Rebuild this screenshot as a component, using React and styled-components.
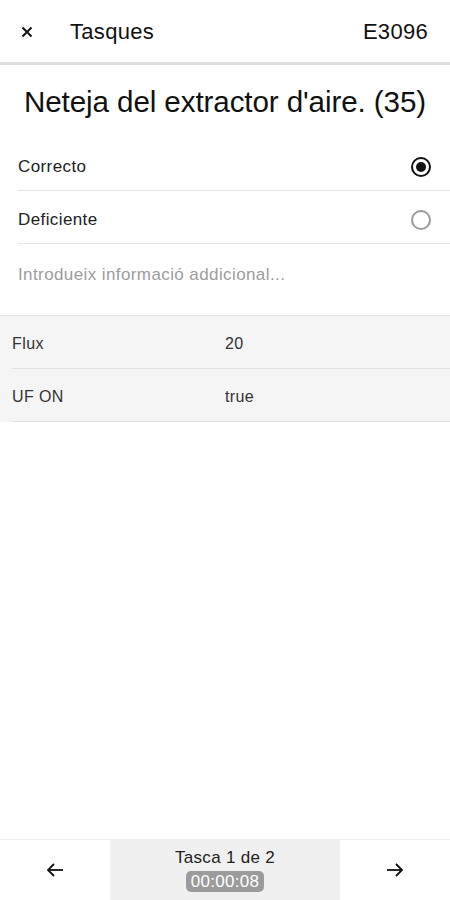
import React from "react";
import styled, { createGlobalStyle } from "styled-components";

const Global = createGlobalStyle`
  html, body {
    margin: 0;
    padding: 0;
    background: #fff;
    font-family: "Liberation Sans", Arial, sans-serif;
  }
  #root {
    height: 900px;
  }
`;

const Page = styled.div`
  height: 900px;
  display: flex;
  flex-direction: column;
  color: #111;
`;

const Header = styled.header`
  height: 65px;
  display: flex;
  align-items: center;
  padding: 2px 22px 0 18px;
  box-sizing: border-box;
  border-bottom: 3px solid #e0e0e0;
  flex-shrink: 0;
  font-size: 22px;
  letter-spacing: 0.3px;
`;

const CloseBtn = styled.span`
  width: 18px;
  display: flex;
  justify-content: center;
`;

const HeaderTitle = styled.span`
  margin-left: 34px;
  flex: 1;
`;

const Title = styled.h1`
  margin: 0;
  padding-top: 20px;
  height: 73px;
  box-sizing: border-box;
  font-size: 29.6px;
  font-weight: 400;
  text-align: center;
  line-height: 34px;
  letter-spacing: -0.1px;
`;

const Options = styled.div`
  padding-left: 18px;
`;

const OptionRow = styled.div`
  height: 53px;
  box-sizing: border-box;
  display: flex;
  align-items: center;
  justify-content: space-between;
  padding: 5px 19px 0 0;
  border-bottom: 1px solid #e6e6e6;
  font-size: 17px;
  letter-spacing: 0.4px;
  color: #222;
`;

const Radio = styled.span`
  width: 20px;
  height: 20px;
  border-radius: 50%;
  box-sizing: border-box;
  border: 2px solid ${(p) => (p.$on ? "#111" : "#9a9a9a")};
  display: flex;
  align-items: center;
  justify-content: center;

  &::after {
    content: "";
    display: ${(p) => (p.$on ? "block" : "none")};
    width: 10px;
    height: 10px;
    border-radius: 50%;
    background: #111;
  }
`;

const Notes = styled.div`
  height: 71px;
  box-sizing: border-box;
  display: flex;
  align-items: center;
  padding: 0 18px 10px;
  font-size: 17px;
  letter-spacing: 0.4px;
  color: #9c9c9c;
`;

const Table = styled.div`
  background: #f5f5f5;
  border-top: 1px solid #e6e6e6;
  padding-left: 12px;
`;

const TableRow = styled.div`
  height: 53px;
  box-sizing: border-box;
  display: grid;
  grid-template-columns: 213px 1fr;
  align-items: center;
  padding-top: 3px;
  border-bottom: 1px solid #e2e2e2;
  font-size: 16px;
  letter-spacing: 0.4px;
  color: #333;
`;

const Spacer = styled.div`
  flex: 1;
`;

const Footer = styled.footer`
  height: 60px;
  display: grid;
  grid-template-columns: 110px 230px 1fr;
  border-top: 1px solid #ececec;
  flex-shrink: 0;
`;

const NavBtn = styled.div`
  display: flex;
  align-items: center;
  justify-content: center;
  background: #fff;
`;

const Counter = styled.div`
  background: #f0f0f0;
  display: flex;
  flex-direction: column;
  align-items: center;
  padding-top: 8px;
  gap: 3px;
  font-size: 17px;
  letter-spacing: 0.3px;
  color: #222;
`;

const Timer = styled.span`
  background: #9b9b9b;
  color: #fff;
  border-radius: 5px;
  padding: 2px 5px 1px;
  font-size: 17px;
  line-height: 18px;
`;

const Arrow = ({ dir }) => (
  <svg width="18" height="16" viewBox="0 0 18 16" fill="none" stroke="#111" strokeWidth="1.8">
    {dir === "left" ? (
      <>
        <path d="M17 8H2" />
        <path d="M8 2L2 8l6 6" />
      </>
    ) : (
      <>
        <path d="M1 8h15" />
        <path d="M10 2l6 6-6 6" />
      </>
    )}
  </svg>
);

export default function App() {
  return (
    <Page>
      <Global />
      <Header>
        <CloseBtn>
          <svg width="12" height="12" viewBox="0 0 12 12" stroke="#111" strokeWidth="2">
            <path d="M1.5 1.5l9 9M10.5 1.5l-9 9" />
          </svg>
        </CloseBtn>
        <HeaderTitle>Tasques</HeaderTitle>
        <span>E3096</span>
      </Header>
      <Title>Neteja del extractor d'aire. (35)</Title>
      <Options>
        <OptionRow>
          Correcto
          <Radio $on />
        </OptionRow>
        <OptionRow>
          Deficiente
          <Radio />
        </OptionRow>
      </Options>
      <Notes>Introdueix informació addicional...</Notes>
      <Table>
        <TableRow>
          <span>Flux</span>
          <span>20</span>
        </TableRow>
        <TableRow>
          <span>UF ON</span>
          <span>true</span>
        </TableRow>
      </Table>
      <Spacer />
      <Footer>
        <NavBtn>
          <Arrow dir="left" />
        </NavBtn>
        <Counter>
          Tasca 1 de 2
          <Timer>00:00:08</Timer>
        </Counter>
        <NavBtn>
          <Arrow dir="right" />
        </NavBtn>
      </Footer>
    </Page>
  );
}
